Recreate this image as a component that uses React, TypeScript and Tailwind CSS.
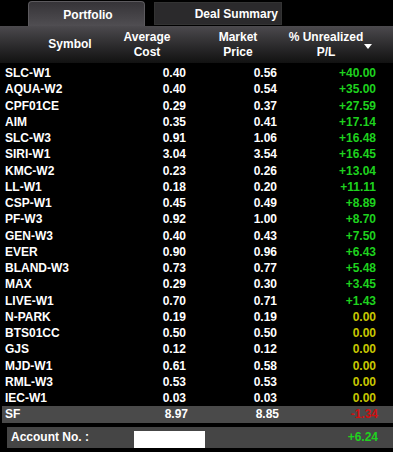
import React from "react";

type Row = { s: string; a: string; m: string; p: string; c: "g" | "y" | "r" };

const rows: Row[] = [
  { s: "SLC-W1", a: "0.40", m: "0.56", p: "+40.00", c: "g" },
  { s: "AQUA-W2", a: "0.40", m: "0.54", p: "+35.00", c: "g" },
  { s: "CPF01CE", a: "0.29", m: "0.37", p: "+27.59", c: "g" },
  { s: "AIM", a: "0.35", m: "0.41", p: "+17.14", c: "g" },
  { s: "SLC-W3", a: "0.91", m: "1.06", p: "+16.48", c: "g" },
  { s: "SIRI-W1", a: "3.04", m: "3.54", p: "+16.45", c: "g" },
  { s: "KMC-W2", a: "0.23", m: "0.26", p: "+13.04", c: "g" },
  { s: "LL-W1", a: "0.18", m: "0.20", p: "+11.11", c: "g" },
  { s: "CSP-W1", a: "0.45", m: "0.49", p: "+8.89", c: "g" },
  { s: "PF-W3", a: "0.92", m: "1.00", p: "+8.70", c: "g" },
  { s: "GEN-W3", a: "0.40", m: "0.43", p: "+7.50", c: "g" },
  { s: "EVER", a: "0.90", m: "0.96", p: "+6.43", c: "g" },
  { s: "BLAND-W3", a: "0.73", m: "0.77", p: "+5.48", c: "g" },
  { s: "MAX", a: "0.29", m: "0.30", p: "+3.45", c: "g" },
  { s: "LIVE-W1", a: "0.70", m: "0.71", p: "+1.43", c: "g" },
  { s: "N-PARK", a: "0.19", m: "0.19", p: "0.00", c: "y" },
  { s: "BTS01CC", a: "0.50", m: "0.50", p: "0.00", c: "y" },
  { s: "GJS", a: "0.12", m: "0.12", p: "0.00", c: "y" },
  { s: "MJD-W1", a: "0.61", m: "0.58", p: "0.00", c: "y" },
  { s: "RML-W3", a: "0.53", m: "0.53", p: "0.00", c: "y" },
  { s: "IEC-W1", a: "0.03", m: "0.03", p: "0.00", c: "y" },
];

const colorCls = (c: Row["c"]) =>
  c === "g" ? "text-[#1ed21e]" : c === "y" ? "text-[#c8c800]" : "text-[#d01010]";

function DataRow({ r, band }: { r: Row; band?: boolean }) {
  return (
    <div
      className={
        "grid grid-cols-[110px_76px_91px_99px] h-[16.25px] items-center leading-none " +
        (band ? "bg-[#4a4a4a] ml-[2px]" : "")
      }
    >
      <div className={band ? "pl-[3px]" : "pl-[5px]"}>{r.s}</div>
      <div className="text-right">{r.a}</div>
      <div className="text-right">{r.m}</div>
      <div className={"text-right " + colorCls(r.c)}>{r.p}</div>
    </div>
  );
}

export default function App() {
  return (
    <div
      className="w-[393px] h-[452px] bg-black text-white font-bold text-[12px] overflow-hidden"
      style={{ fontFamily: '"Liberation Sans", Arial, sans-serif' }}
    >
      {/* Tabs */}
      <div className="flex items-end h-[26px] pl-[28px]">
        <div className="w-[117px] h-[25px] rounded-t-[4px] border border-b-0 border-[#5c5a5e] bg-gradient-to-b from-[#363438] to-[#504e52] flex items-center justify-center pl-[3px] pt-[1px]">
          Portfolio
        </div>
        <div className="ml-[9px] w-[128px] h-[23px] mb-[1px] bg-[#2b2a2c] border border-[#333] flex items-center justify-end pr-[3px]">
          Deal Summary
        </div>
      </div>
      {/* Header */}
      <div className="relative h-[37px] bg-gradient-to-b from-[#4c4a4e] via-[#2e2d2f] to-[#121212] flex items-center leading-[15px] text-[12px]">
        <div className="ml-[40px] w-[60px] text-center">Symbol</div>
        <div className="ml-[17px] w-[60px] text-center">
          Average
          <br />
          Cost
        </div>
        <div className="ml-[31px] w-[60px] text-center">
          Market
          <br />
          Price
        </div>
        <div className="ml-[8px] w-[100px] text-center">
          % Unrealized
          <br />
          P/L
        </div>
        <svg className="absolute left-[364px] top-[18px]" width="8" height="5" viewBox="0 0 8 5">
          <polygon points="0,0 8,0 4,5" fill="#ffffff" />
        </svg>
      </div>
      {/* Rows */}
      <div className="pt-[2px]">
        {rows.map((r) => (
          <DataRow key={r.s} r={r} />
        ))}
        <DataRow r={{ s: "SF", a: "8.97", m: "8.85", p: "-1.34", c: "r" }} band />
      </div>
      {/* Account */}
      <div className="mt-[4px] ml-[7px] h-[21px] bg-[#454545] flex items-center">
        <div className="pl-[4px] w-[127px]">Account No. :</div>
        <div className="w-[71px] h-[17px] bg-white self-end"></div>
        <div className="flex-1 text-right pr-[15px] text-[#1ed21e]">+6.24</div>
      </div>
    </div>
  );
}
